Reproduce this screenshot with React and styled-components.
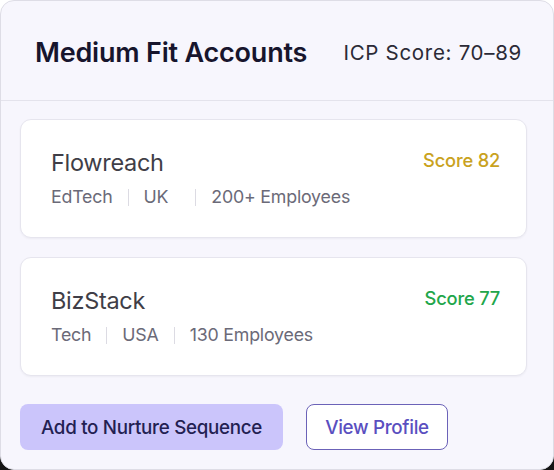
import React from 'react'
import styled, { createGlobalStyle } from 'styled-components'

const GlobalStyle = createGlobalStyle`
  html, body {
    margin: 0;
    padding: 0;
    background: linear-gradient(#ffffff 0%, #ffffff 50%, #141414 50%, #141414 100%);
  }
  * { box-sizing: border-box; }
`

const accounts = [
  { name: 'Flowreach', meta: ['EdTech', 'UK', '200+ Employees'], wide: 1, score: 82, tone: 'gold' },
  { name: 'BizStack', meta: ['Tech', 'USA', '130 Employees'], score: 77, tone: 'green' },
]

function App() {
  return (
    <>
      <GlobalStyle />
      <Panel>
        <Header>
          <Title>Medium Fit Accounts</Title>
          <Range>ICP Score: 70–89</Range>
        </Header>
        <List>
          {accounts.map((a) => (
            <Card key={a.name}>
              <CardTop>
                <Name>{a.name}</Name>
                <Score tone={a.tone}>Score {a.score}</Score>
              </CardTop>
              <Meta>
                {a.meta.map((m, i) => (
                  <React.Fragment key={m}>
                    {i > 0 && <Sep />}
                    <MetaItem pad={a.wide === i}>{m}</MetaItem>
                  </React.Fragment>
                ))}
              </Meta>
            </Card>
          ))}
        </List>
        <Actions>
          <PrimaryButton>Add to Nurture Sequence</PrimaryButton>
          <OutlineButton>View Profile</OutlineButton>
        </Actions>
      </Panel>
    </>
  )
}

export default App

const Panel = styled.div`
  width: 554px;
  height: 470px;
  background: #f7f6fd;
  border: 1px solid #dedde6;
  border-radius: 14px;
  display: flex;
  flex-direction: column;
  font-family: Inter, 'Noto Sans', sans-serif;
  overflow: hidden;
`

const Header = styled.div`
  height: 100px;
  flex-shrink: 0;
  display: flex;
  align-items: center;
  justify-content: space-between;
  padding: 4px 31px 0 34px;
  border-bottom: 1px solid #e4e3ec;
`

const Title = styled.h1`
  margin: 0;
  font-size: 27px;
  font-weight: 600;
  letter-spacing: -0.2px;
  color: #17152d;
`

const Range = styled.div`
  font-size: 20.5px;
  font-weight: 400;
  letter-spacing: 0.7px;
  color: #2b2a36;
`

const List = styled.div`
  display: flex;
  flex-direction: column;
  gap: 19px;
  padding: 18px 26px 0 19px;
`

const Card = styled.div`
  height: 119px;
  background: #ffffff;
  border: 1px solid #e6e5ee;
  border-radius: 11px;
  box-shadow: 0 1px 2px rgba(30, 30, 60, 0.05);
  padding: 28px 26px 0 30px;
  display: flex;
  flex-direction: column;
  gap: 7px;
`

const CardTop = styled.div`
  display: flex;
  justify-content: space-between;
  align-items: flex-start;
`

const Name = styled.div`
  font-size: 23.5px;
  font-weight: 400;
  letter-spacing: -0.3px;
  color: #3f3e47;
  line-height: 30px;
`

const Score = styled.div`
  font-size: 18.3px;
  font-weight: 500;
  letter-spacing: -0.2px;
  line-height: 24px;
  color: ${(p) => (p.tone === 'gold' ? '#c9a21e' : '#22a64b')};
`

const Meta = styled.div`
  display: flex;
  align-items: center;
  gap: 15px;
  font-size: 17.8px;
  letter-spacing: -0.2px;
  color: #6b6a78;
  line-height: 24px;
`

const MetaItem = styled.span`
  padding-right: ${(p) => (p.pad ? '12px' : '0')};
`

const Sep = styled.span`
  width: 1px;
  height: 17px;
  background: #dcdbe3;
`

const Actions = styled.div`
  display: flex;
  gap: 23px;
  padding: 28px 0 0 19px;
`

const PrimaryButton = styled.button`
  height: 46px;
  width: 263px;
  border: none;
  border-radius: 8px;
  background: #cbc5fb;
  color: #231f52;
  font-family: Inter, 'Noto Sans', sans-serif;
  font-size: 18.8px;
  font-weight: 550;
  letter-spacing: -0.3px;
`

const OutlineButton = styled.button`
  height: 46px;
  width: 142px;
  border: 1px solid #6b62b8;
  border-radius: 8px;
  background: #ffffff;
  color: #5a4fc0;
  font-family: Inter, 'Noto Sans', sans-serif;
  font-size: 18.8px;
  font-weight: 500;
  letter-spacing: -0.3px;
`
